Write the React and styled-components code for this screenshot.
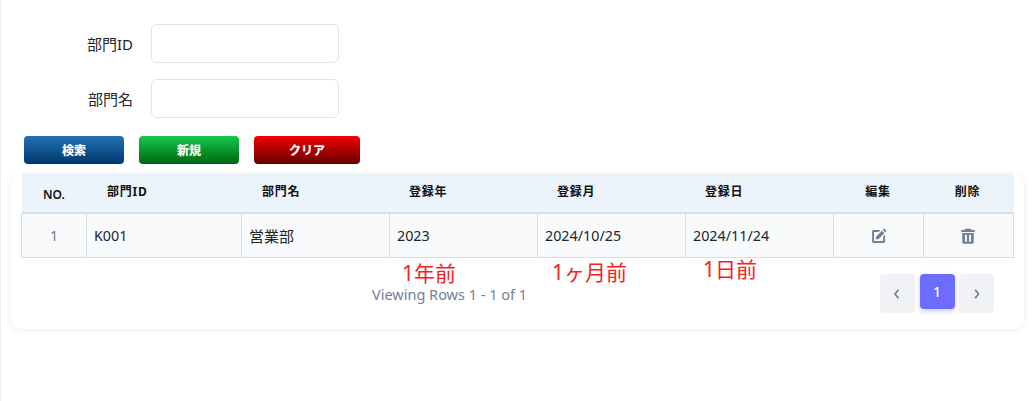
import React from "react";
import styled, { createGlobalStyle } from "styled-components";

const FONT = `"Noto Sans", "Noto Sans CJK JP", sans-serif`;

const Global = createGlobalStyle`
  html, body { margin: 0; padding: 0; background: #fff; }
  body { font-family: ${FONT}; }
  * { box-sizing: border-box; }
`;

const Page = styled.div`
  width: 1032px;
  height: 401px;
  overflow: hidden;
  padding: 24px 8px 0 10px;
  background: #fff;
  border-left: 1px solid #f1f1f1;
`;

const Form = styled.form`
  display: flex;
  flex-direction: column;
  gap: 16px;
  margin: 0;
`;

const Field = styled.div`
  display: flex;
  align-items: center;
  gap: 18px;
`;

const Label = styled.label`
  width: 122px;
  text-align: right;
  font-size: 15px;
  line-height: 20px;
  color: #212529;
`;

const Input = styled.input`
  width: 188px;
  height: 39px;
  border: 1px solid #dfe3e9;
  border-radius: 6px;
  background: #fff;
  outline: none;
`;

const Actions = styled.div`
  display: flex;
  gap: 15px;
  margin: 18px 0 10px 13px;
`;

const gradients = {
  blue: "linear-gradient(#2272b4, #00376c)",
  green: "linear-gradient(#14c94e, #006410)",
  red: "linear-gradient(#f40000, #640000)",
};

const ActionButton = styled.button`
  width: ${(p) => p.$w}px;
  height: 28px;
  padding: 2px 0 0;
  border: 0;
  border-radius: 4px;
  background: ${(p) => gradients[p.$tone]};
  color: #fff;
  font-family: ${FONT};
  font-size: 12px;
  font-weight: 700;
  line-height: 26px;
  text-shadow: 0 0 1px rgba(255, 255, 255, 0.5);
`;

const Card = styled.section`
  position: relative;
  width: 1013px;
  height: 155px;
  padding: 0 10px;
  background: #fff;
  border-radius: 10px;
  box-shadow: 0 1px 6px rgba(30, 40, 60, 0.09);
`;

const COLS = "64px 155px 148px 148px 148px 148px 90px 89px";

const HeadRow = styled.div`
  display: grid;
  grid-template-columns: ${COLS};
  height: 40px;
  margin-left: 1px;
  background: #ebf3fb;
  border-bottom: 2px solid #d9e0e8;
`;

const HeadCell = styled.div`
  display: flex;
  justify-content: ${(p) => (p.$pad === undefined ? "center" : "flex-start")};
  padding-left: ${(p) => p.$pad || 0}px;
  padding-top: ${(p) => (p.$low ? "12px" : "9px")};
  font-size: 12px;
  line-height: 18px;
  font-weight: ${(p) => (p.$low ? 600 : 700)};
  letter-spacing: ${(p) => (p.$low ? 0 : 0.8)}px;
  color: #111;
`;

const BodyRow = styled.div`
  display: grid;
  grid-template-columns: ${COLS};
  height: 44px;
  background: #f8fafc;
  border: 1px solid #d6dde4;
  border-top: 0;
`;

const Cell = styled.div`
  display: flex;
  align-items: center;
  justify-content: ${(p) => (p.$center ? "center" : "flex-start")};
  padding-left: ${(p) => (p.$center ? 0 : 7)}px;
  font-size: ${(p) => (p.$cjk ? 15 : 14.3)}px;
  color: ${(p) => (p.$muted ? "#718096" : "#212529")};
  border-left: ${(p) => (p.$first ? "0" : "1px solid #d6dde4")};
`;

const IconSvg = styled.svg`
  width: ${(p) => p.$size || 16}px;
  height: ${(p) => p.$size || 16}px;
  fill: #718096;
  display: block;
`;

const Footer = styled.div`
  position: relative;
  height: 71px;
`;

const Viewing = styled.div`
  position: absolute;
  left: 351px;
  top: 27px;
  font-size: 14.5px;
  line-height: 18px;
  color: #718096;
`;

const Note = styled.span`
  position: absolute;
  left: ${(p) => p.$x}px;
  top: ${(p) => p.$y}px;
  font-size: 21px;
  line-height: 22px;
  color: #f5211c;
  white-space: nowrap;
`;

const Pager = styled.div`
  position: absolute;
  right: 20px;
  top: 16px;
  display: flex;
  gap: 4.5px;
  align-items: flex-start;
`;

const PageBtn = styled.button`
  width: 35px;
  height: ${(p) => (p.$active ? 35 : 39)}px;
  padding: 0;
  border: 0;
  border-radius: 4px;
  display: flex;
  align-items: center;
  justify-content: center;
  font-family: ${FONT};
  font-size: 14px;
  font-weight: 500;
  color: ${(p) => (p.$active ? "#fff" : "#718096")};
  background: ${(p) => (p.$active ? "#6c6cff" : "#f0f2f5")};
  box-shadow: ${(p) => (p.$active ? "0 2px 5px rgba(108,108,255,0.35)" : "none")};
`;

const Chevron = ({ dir }) => (
  <svg width="12" height="12" viewBox="0 0 12 12" fill="none" stroke="#718096" strokeWidth="1.7" strokeLinecap="round" strokeLinejoin="round">
    <path d={dir === "left" ? "M6 2.4 3 6l3 3.6" : "M4.6 2.4 7.6 6l-3 3.6"} />
  </svg>
);

const EditIcon = () => (
  <IconSvg viewBox="0 0 16 16">
    <path d="M2.5 2h7L7.6 3.9H3v9.2h9.2V8.4l1.9-1.9v7c0 .8-.7 1.5-1.5 1.5h-10C1.8 15 1.1 14.3 1.1 13.5v-10C1.1 2.7 1.7 2 2.5 2z" />
    <path d="M5.2 8.4 10.9 2.7l2.5 2.5-5.7 5.7-3 .6zM11.7 1.9l.9-.9c.3-.3.7-.3 1 0l1.5 1.5c.3.3.3.7 0 1l-.9.9z" />
  </IconSvg>
);

const TrashIcon = () => (
  <IconSvg viewBox="0 0 16 16" $size={18}>
    <path d="M5.6 1.6h4.8l.6 1.1h3v1.7H2V2.7h3zM2.9 5.3h10.2v8.2c0 .8-.6 1.4-1.4 1.4H4.3c-.8 0-1.4-.6-1.4-1.4zm2.5 1.6v6.2h1.6V6.9zm3.6 0v6.2h1.6V6.9z" fillRule="evenodd" />
  </IconSvg>
);

const heads = [
  { t: "NO.", low: true },
  { t: "部門ID", pad: 21 },
  { t: "部門名", pad: 21 },
  { t: "登録年", pad: 20 },
  { t: "登録月", pad: 20 },
  { t: "登録日", pad: 20 },
  { t: "編集" },
  { t: "削除" },
];

export default function App() {
  return (
    <Page>
      <Global />
      <Form>
        <Field>
          <Label>部門ID</Label>
          <Input />
        </Field>
        <Field>
          <Label>部門名</Label>
          <Input />
        </Field>
      </Form>
      <Actions>
        <ActionButton $tone="blue" $w={100}>検索</ActionButton>
        <ActionButton $tone="green" $w={100}>新規</ActionButton>
        <ActionButton $tone="red" $w={106}>クリア</ActionButton>
      </Actions>
      <Card>
        <HeadRow>
          {heads.map((h) => (
            <HeadCell key={h.t} $low={h.low} $pad={h.pad}>{h.t}</HeadCell>
          ))}
        </HeadRow>
        <BodyRow>
          <Cell $first $center $muted>1</Cell>
          <Cell>K001</Cell>
          <Cell $cjk>営業部</Cell>
          <Cell>2023</Cell>
          <Cell>2024/10/25</Cell>
          <Cell>2024/11/24</Cell>
          <Cell $center><EditIcon /></Cell>
          <Cell $center><TrashIcon /></Cell>
        </BodyRow>
        <Footer>
          <Note $x={381} $y={4}>1年前</Note>
          <Note $x={531} $y={3}>1ヶ月前</Note>
          <Note $x={682} $y={0}>1日前</Note>
          <Viewing>Viewing Rows 1 - 1 of 1</Viewing>
          <Pager>
            <PageBtn><Chevron dir="left" /></PageBtn>
            <PageBtn $active>1</PageBtn>
            <PageBtn><Chevron dir="right" /></PageBtn>
          </Pager>
        </Footer>
      </Card>
    </Page>
  );
}
